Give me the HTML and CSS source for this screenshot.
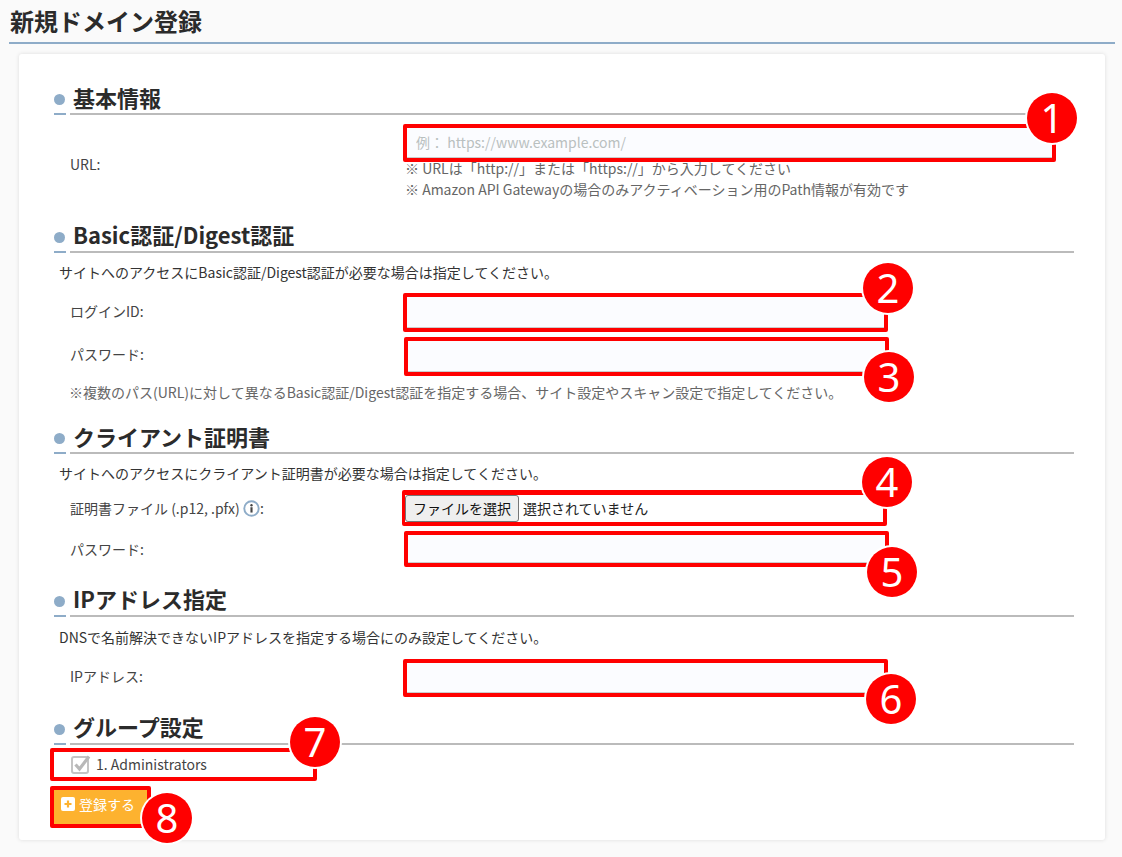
FILE: index.html
```html
<!DOCTYPE html>
<html lang="ja">
<head>
<meta charset="utf-8">
<title>新規ドメイン登録</title>
<link rel="stylesheet" href="styles.css">
</head>
<body>
<h1 class="page-title">新規ドメイン登録</h1>
<main class="card">
  <section class="sec sec-basic">
    <h2 class="sec-head"><span class="sec-dot"></span><span class="sec-name">基本情報</span></h2>
    <div class="row row-top">
      <label class="lbl lbl-url">URL:</label>
      <div class="col">
        <div class="mark mark-url"><input class="inp" placeholder="例： https://www.example.com/"><span class="badge badge-1">1</span></div>
        <p class="help help-first">※ URLは「http://」または「https://」から入力してください</p>
        <p class="help">※ Amazon API Gatewayの場合のみアクティベーション用のPath情報が有効です</p>
      </div>
    </div>
  </section>

  <section class="sec sec-auth">
    <h2 class="sec-head"><span class="sec-dot"></span><span class="sec-name">Basic認証/Digest認証</span></h2>
    <p class="desc">サイトへのアクセスにBasic認証/Digest認証が必要な場合は指定してください。</p>
    <div class="row row-id">
      <label class="lbl">ログインID:</label>
      <div class="mark mark-tall"><input class="inp"><span class="badge badge-2">2</span></div>
    </div>
    <div class="row row-next">
      <label class="lbl">パスワード:</label>
      <div class="mark mark-tall mark-shift"><input class="inp"><span class="badge badge-3">3</span></div>
    </div>
    <p class="help help-note">※複数のパス(URL)に対して異なるBasic認証/Digest認証を指定する場合、サイト設定やスキャン設定で指定してください。</p>
  </section>

  <section class="sec sec-cert">
    <h2 class="sec-head"><span class="sec-dot"></span><span class="sec-name">クライアント証明書</span></h2>
    <p class="desc">サイトへのアクセスにクライアント証明書が必要な場合は指定してください。</p>
    <div class="row row-file">
      <label class="lbl lbl-file">証明書ファイル (.p12, .pfx)
        <svg class="info" viewBox="0 0 16 16" width="17" height="17"><circle cx="8" cy="8" r="6.8" fill="none" stroke="#8eacc8" stroke-width="1.8"/><circle cx="8" cy="4.9" r="1.1" fill="#444"/><rect x="7" y="6.8" width="2" height="5" fill="#444"/></svg>:</label>
      <div class="mark mark-file"><button class="file-btn" type="button">ファイルを選択</button><span class="file-name">選択されていません</span><span class="badge badge-4">4</span></div>
    </div>
    <div class="row row-pass">
      <label class="lbl lbl-plain">パスワード:</label>
      <div class="mark mark-short mark-shift"><input class="inp"><span class="badge badge-5">5</span></div>
    </div>
  </section>

  <section class="sec sec-ip">
    <h2 class="sec-head"><span class="sec-dot"></span><span class="sec-name">IPアドレス指定</span></h2>
    <p class="desc">DNSで名前解決できないIPアドレスを指定する場合にのみ設定してください。</p>
    <div class="row">
      <label class="lbl">IPアドレス:</label>
      <div class="mark"><input class="inp"><span class="badge badge-6">6</span></div>
    </div>
  </section>

  <section class="sec sec-group">
    <h2 class="sec-head"><span class="sec-dot"></span><span class="sec-name">グループ設定</span></h2>
    <div class="mark mark-group">
      <svg class="check" viewBox="0 0 20 20" width="20" height="20"><rect x="1" y="2" width="16" height="16" rx="2" fill="#fff" stroke="#c4c4c4" stroke-width="2"/><path d="M4.5 9.5l4 4.5L18 1.5" fill="none" stroke="#b8b8b8" stroke-width="3.2"/></svg>
      <span class="group-name">1. Administrators</span>
      <span class="badge badge-7">7</span>
    </div>
    <div class="mark mark-submit">
      <button class="submit" type="button"><svg class="plus" viewBox="0 0 14 14" width="14" height="14"><rect width="14" height="14" rx="2" fill="#fff"/><path d="M7 3.5v7M3.5 7h7" stroke="#fdb22f" stroke-width="2.2"/></svg>登録する</button>
      <span class="badge badge-8">8</span>
    </div>
  </section>
</main>
</body>
</html>
```
FILE: styles.css
```css
* { box-sizing: border-box; }
html, body { margin: 0; padding: 0; }
body {
  width: 1122px;
  height: 857px;
  overflow: hidden;
  background: #fafafa;
  color: #333;
  font-family: "Noto Sans CJK JP", "Noto Sans", sans-serif;
  font-size: 14px;
  line-height: 20px;
}
p { margin: 0; }
.page-title {
  margin: 0 7px 0 9px;
  height: 44px;
  padding: 3px 0 0 1px;
  border-bottom: 2px solid #8eacc8;
  font-size: 24px;
  line-height: 36px;
  font-weight: 700;
  color: #2b2b2b;
}
.card {
  margin: 10px 17px 0 19px;
  height: 786px;
  padding: 27px 31px 0 35px;
  background: #fff;
  border-radius: 3px;
  box-shadow: 0 0 4px rgba(0,0,0,.12);
}
.sec-head {
  margin: 0;
  height: 34px;
  display: flex;
  font-size: 22px;
  line-height: 30px;
  font-weight: 700;
  color: #2b2b2b;
}
.sec-basic .sec-head, .sec-cert .sec-head { line-height: 32px; }
.sec-dot {
  width: 12px;
  border-bottom: 2px solid #8eacc8;
  position: relative;
  flex: none;
}
.sec-dot::before {
  content: "";
  position: absolute;
  left: 0;
  top: 13px;
  width: 11px;
  height: 11px;
  border-radius: 50%;
  background: #8eacc8;
}
.sec-name {
  flex: 1;
  margin-left: 4px;
  padding-left: 3px;
  border-bottom: 2px solid #bbb;
}
.row { display: flex; align-items: center; padding-left: 16px; }
.row-top { margin-top: 9px; }
.lbl { width: 333px; flex: none; color: #444; padding-bottom: 3px; }
.lbl-plain { padding-bottom: 0; }
.lbl-url { padding: 3px 0 0; }
.col { display: flex; flex-direction: column; }
.mark {
  position: relative;
  width: 485px;
  height: 38px;
  border: 4px solid #f00;
  border-radius: 2px;
}
.mark-url { width: 653px; }
.mark-tall { height: 39px; }
.mark-short { height: 36px; }
.mark-shift { margin-left: 1px; }
.inp {
  display: block;
  width: 100%;
  height: 100%;
  padding: 0 9px 1px;
  border: 0;
  border-bottom: 1px solid #ccc;
  background: #fbfcff;
  font: inherit;
  outline: none;
}
.inp::placeholder { color: #b9c0c0; opacity: 1; }
.help { color: #666; line-height: 21px; }
.help-first { margin-top: -4px; }
.col .help { padding-left: 2px; }
.desc { padding-left: 5px; margin-top: 9px; height: 20px; color: #333; }
.sec-auth { margin-top: 19px; }
.row-id { margin-top: 11px; }
.row-next { margin-top: 5px; }
.row-next .lbl { padding-bottom: 6px; }
.help-note { padding-left: 15px; margin-top: 6px; }
.sec-cert { margin-top: 17px; }
.row-file { margin-top: 7px; }
.lbl-file { width: 332px; padding-bottom: 0; }
.mark-file {
  height: 36px;
  border-width: 5px 4px 4px 3px;
  display: flex;
  align-items: center;
}
.file-btn {
  width: 114px;
  height: 27px;
  padding: 0 0 2px;
  background: #efefef;
  border: 1px solid #767676;
  border-radius: 3px;
  font: inherit;
  color: #111;
}
.file-name { margin-left: 4px; padding-bottom: 2px; color: #222; }
.info { vertical-align: -3px; }
.row-pass { margin-top: 5px; }
.sec-ip { margin-top: 16px; }
.sec-ip .desc { margin-top: 10px; }
.sec-ip .row { margin-top: 12px; }
.sec-ip .lbl { padding-bottom: 4px; }
.sec-group { margin-top: 14px; }
.mark-group {
  margin: 3px 0 0 -4px;
  width: 267px;
  height: 33px;
  display: flex;
  align-items: center;
  padding-left: 17px;
  color: #444;
}
.check { flex: none; }
.group-name { margin-left: 5px; padding-bottom: 1px; }
.mark-submit {
  margin: 5px 0 0 -4px;
  width: 101px;
  height: 42px;
}
.submit {
  display: flex;
  align-items: center;
  width: 100%;
  height: 100%;
  padding: 0 0 6px 7px;
  background: #fdb22f;
  border: 0;
  color: #fff;
  font: inherit;
}
.plus { margin-right: 4px; }
.badge {
  position: absolute;
  width: 50px;
  height: 50px;
  border-radius: 50%;
  background: #f00;
  box-shadow: 0 0 0 2px #fff;
  color: #fff;
  font-family: "Noto Sans", sans-serif;
  font-size: 40px;
  font-weight: 400;
  line-height: 50px;
  text-align: center;
}
.badge-1 { right: -25px; top: -35px; }
.badge-2 { right: -29px; top: -34px; }
.badge-3 { right: -29px; bottom: -30px; }
.badge-4 { right: -29px; top: -38px; }
.badge-5 { right: -32px; bottom: -34px; }
.badge-6 { right: -32px; bottom: -31px; }
.badge-7 { right: -27px; top: -35px; }
.badge-8 { right: -45px; bottom: -19px; }
```
